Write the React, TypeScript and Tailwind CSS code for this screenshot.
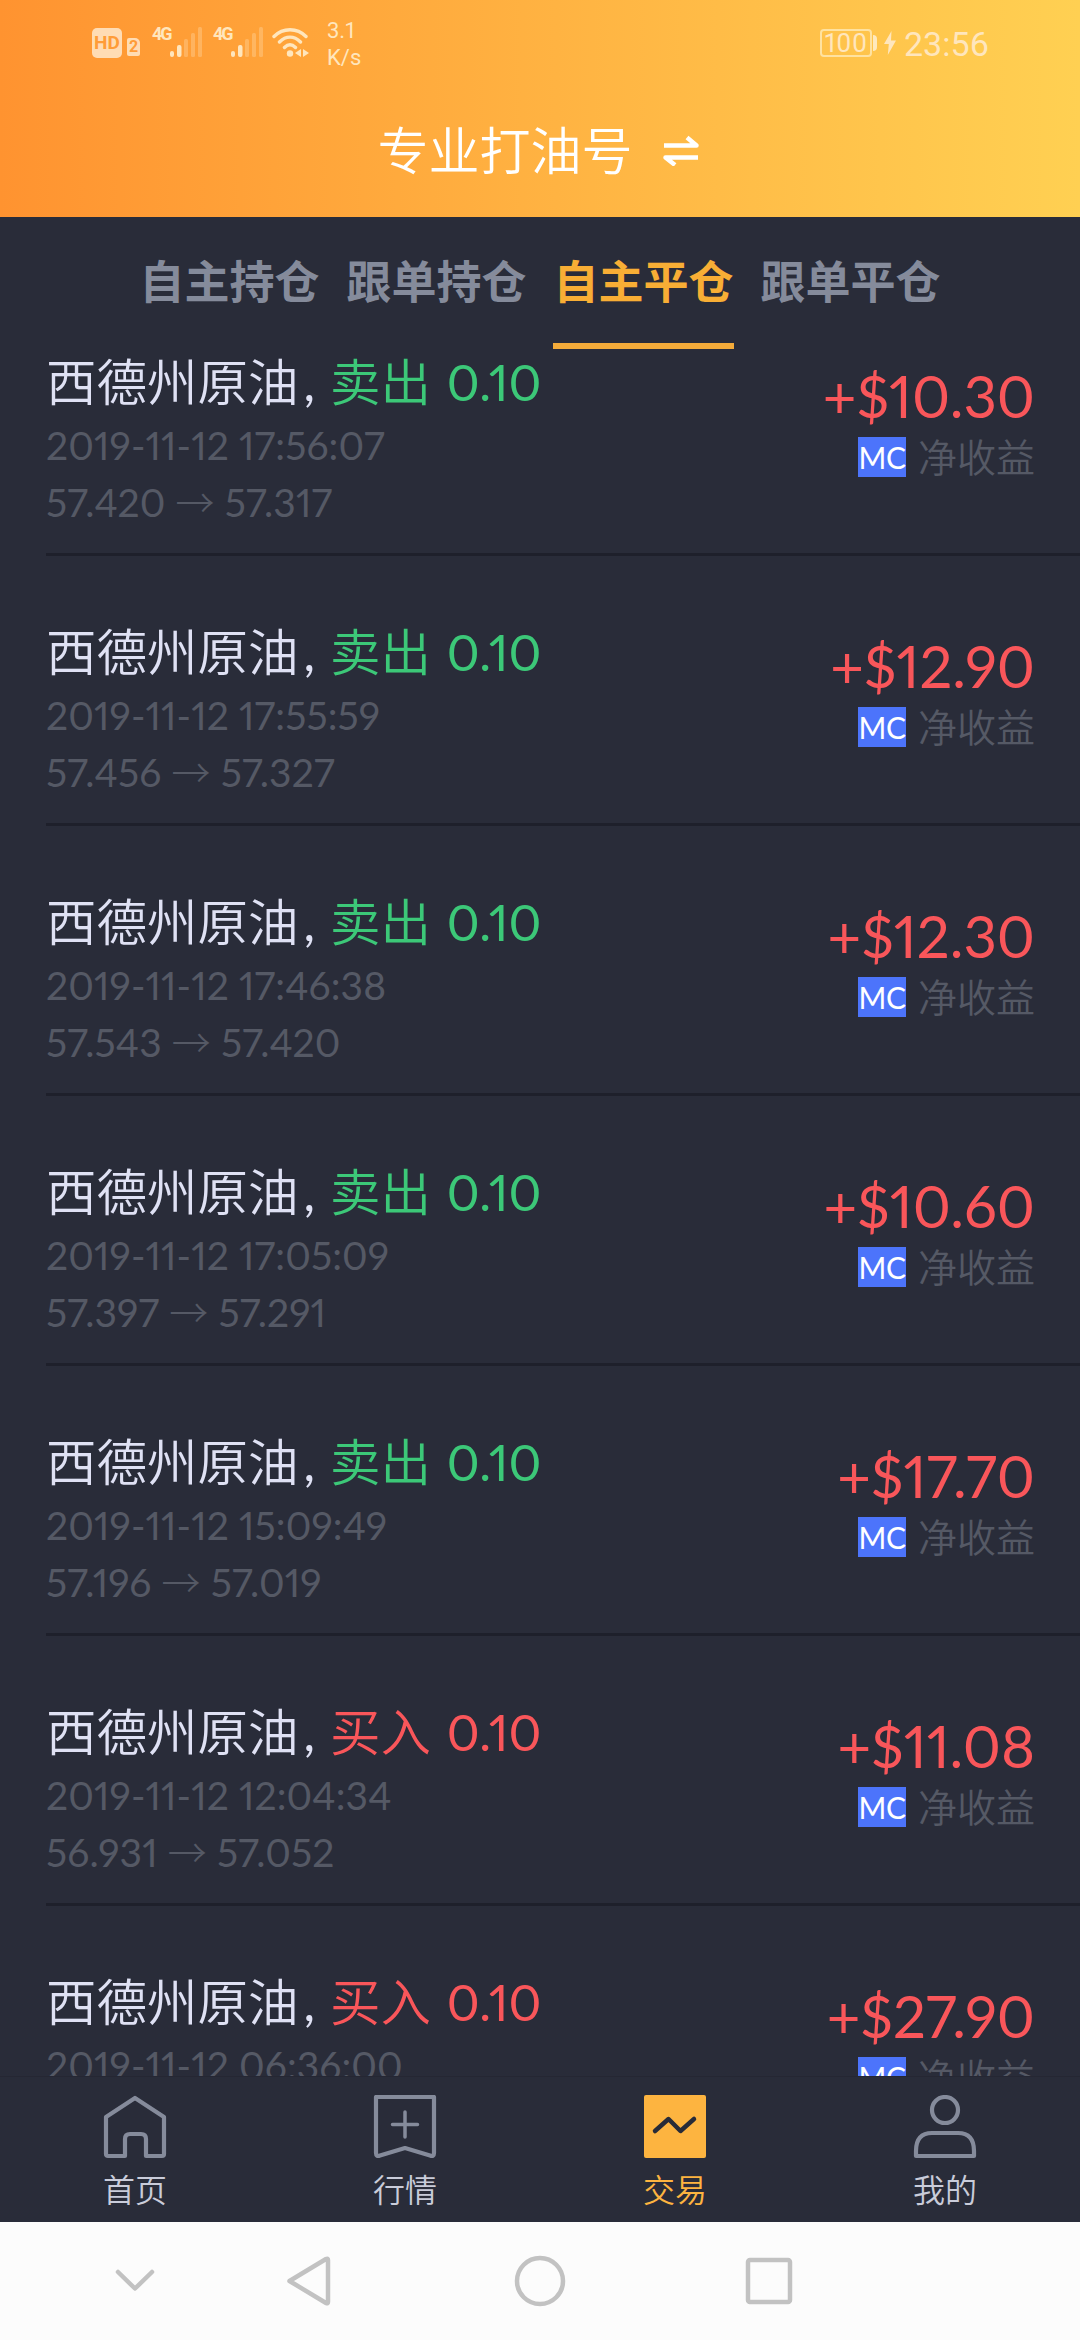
import type { ReactNode } from "react";
import clsx from "clsx";

type Order = {
    side: "buy" | "sell";
    time: string;
    open?: string;
    close?: string;
    profit: string;
};

const tabs = ["自主持仓", "跟单持仓", "自主平仓", "跟单平仓"];
const activeTab = "自主平仓";

const orders: Order[] = [
    { side: "sell", time: "2019-11-12 17:56:07", open: "57.420", close: "57.317", profit: "+$10.30" },
    { side: "sell", time: "2019-11-12 17:55:59", open: "57.456", close: "57.327", profit: "+$12.90" },
    { side: "sell", time: "2019-11-12 17:46:38", open: "57.543", close: "57.420", profit: "+$12.30" },
    { side: "sell", time: "2019-11-12 17:05:09", open: "57.397", close: "57.291", profit: "+$10.60" },
    { side: "sell", time: "2019-11-12 15:09:49", open: "57.196", close: "57.019", profit: "+$17.70" },
    { side: "buy", time: "2019-11-12 12:04:34", open: "56.931", close: "57.052", profit: "+$11.08" },
    { side: "buy", time: "2019-11-12 06:36:00", profit: "+$27.90" },
];

function Signal() {
    return (
        <div className="relative h-8 w-[52px]">
            <span className="absolute left-0 top-0 text-[18px] leading-[14px] font-bold tracking-[-2px]">4G</span>
            <svg className="absolute left-[18px] top-0" width="34" height="32" fill="currentColor">
                <rect x="0" y="24" width="4" height="6" rx="2" />
                <rect x="7" y="18" width="4.5" height="12" rx="2" />
                <g opacity=".3">
                    <rect x="14" y="12" width="4" height="18" rx="1.5" />
                    <rect x="21" y="6" width="4" height="24" rx="1.5" />
                    <rect x="28" y="0" width="4" height="30" rx="1.5" />
                </g>
            </svg>
        </div>
    );
}

function StatusBar() {
    return (
        <div className="flex h-[84px] items-center justify-between pl-[92px] pr-[91px] pt-0.5 font-['Roboto',sans-serif] text-[#ffe6bd]">
            <div className="flex items-center">
                <div className="flex h-[30px] w-[30px] items-center justify-center rounded-[5px] bg-[#ffdcb4] text-[19px] font-bold text-[#ff9c38]">
                    HD
                </div>
                <div className="ml-[5px] mt-2 flex h-[18px] w-[13px] items-center justify-center rounded-[2px] rounded-tr-[5px] bg-[#ffdcb4] text-[16px] font-bold text-[#ff9c38]">
                    2
                </div>
                <div className="ml-3 flex gap-[9px]">
                    <Signal />
                    <Signal />
                </div>
                <svg className="ml-[7px]" width="38" height="32" fill="none" stroke="currentColor" strokeWidth="3.4" strokeLinecap="round">
                    <path d="M2 9.500C11 .5 25 .5 34 9.500M7.500 15C14 8.500 22 8.500 28.500 15M12.500 20.500C16 17 20 17 23.500 20.500" />
                    <circle cx="18" cy="26.500" r="3.200" fill="currentColor" stroke="none" />
                    <path d="M29 22v8l-6-4zM31 22v8l6-4z" fill="currentColor" stroke="none" />
                </svg>
                <div className="ml-[17px] mt-0.5 text-[22px] leading-[27px]">
                    3.1
                    <br />
                    K/s
                </div>
            </div>
            <div className="flex items-center">
                <div className="flex h-7 w-[52px] items-center justify-center rounded-[4px] border-2 border-[#ffe2a0] text-[26px] tracking-[0.5px]">
                    100
                </div>
                <div className="ml-px h-4 w-1 rounded-r-sm bg-[#ffe9bd]" />
                <svg className="ml-[7px] mr-[8px]" width="12" height="24" fill="currentColor">
                    <path d="M7.500 0 0 13h4.800L3.800 24 12 9.500H7z" />
                </svg>
                <span className="mt-0.5 text-[34px]">23:56</span>
            </div>
        </div>
    );
}

function Header() {
    return (
        <header className="h-[217px] shrink-0 bg-linear-to-r from-[#ff9330] to-[#ffd052]">
            <StatusBar />
            <div className="flex h-[133px] items-start justify-center pr-[4px] pt-[33px] text-white">
                <h1 className="text-[51px] leading-[68px] font-[350]">专业打油号</h1>
                <svg className="ml-[30px] mt-[15px]" width="36" height="34" fill="none" stroke="currentColor" strokeWidth="4.500" strokeLinejoin="round">
                    <path d="M1 13.500H33.500L24 5.500M35 25.500H2.500L12 33" />
                </svg>
            </div>
        </header>
    );
}

function Tabs() {
    return (
        <nav className="flex h-[134px] shrink-0 justify-center gap-[26px]">
            {tabs.map((tab) => (
                <button
                    key={tab}
                    className={clsx(
                        "flex h-[132px] w-[181px] justify-center border-b-[6px] pt-[35px] text-[45px] leading-[60px] font-bold whitespace-nowrap",
                        tab === activeTab ? "border-[#f4ab3a] text-[#f8ae35]" : "border-transparent text-[#858b9b]"
                    )}
                >
                    {tab}
                </button>
            ))}
        </nav>
    );
}

function OrderRow({ order }: { order: Order }) {
    return (
        <li className="ml-[46px] flex h-[270px] justify-between border-b-[3px] border-[#1e202b] pr-[45px] pt-[66px]">
            <div>
                <p className="text-[50.500px] leading-[60px] text-[#dfe1f4]">
                    <span className="mr-[5px] font-[350]">西德州原油</span>,{" "}
                    <span className={clsx("ml-[2px]", order.side === "sell" ? "text-[#3cc878]" : "text-[#f9565a]")}>
                        <span className="font-[350]">{order.side === "sell" ? "卖出" : "买入"}</span>{" "}
                        <span className="ml-[3px] text-[50px]">0.10</span>
                    </span>
                </p>
                <p className="mt-[5px] text-[39px] leading-[57px] tracking-[0.1px] text-[#555965]">{order.time}</p>
                {order.open && (
                    <p className="-mt-0.5 text-[39px] leading-[57px] tracking-[0.1px] text-[#555965]">
                        {order.open} <span className="font-['Noto_Sans_CJK_SC',sans-serif] font-light">→</span> {order.close}
                    </p>
                )}
            </div>
            <div className="flex flex-col items-end">
                <p className="mt-[10px] text-[58px] leading-[68px] text-[#f9565a]">{order.profit}</p>
                <div className="mt-[7px] flex items-center gap-3">
                    <span className="flex h-10 w-12 items-center justify-center bg-[#4c74fb] text-[30px] tracking-[-0.5px] text-white">MC</span>
                    <span className="text-[39px] leading-10 font-[350] text-[#555965]">净收益</span>
                </div>
            </div>
        </li>
    );
}

function NavItem({ label, active, children }: { label: string; active?: boolean; children: ReactNode }) {
    return (
        <div className={clsx("flex flex-1 flex-col items-center pt-[18px]", active ? "text-[#fdb440]" : "text-[#858b9b]")}>
            <svg width="64" height="64" fill="none" stroke="currentColor" strokeWidth="4.200" strokeLinejoin="round" strokeLinecap="round">
                {children}
            </svg>
            <span className={clsx("mt-[11px] text-[32px] leading-10 font-[350]", !active && "text-[#c9ccda]")}>{label}</span>
        </div>
    );
}

function BottomNav() {
    return (
        <nav className="flex h-[146px] shrink-0 border-t border-[#252733]">
            <NavItem label="首页">
                <path d="M32 3 61 22V59Q61 61 59 61H43V44Q43 39 38 39H27Q22 39 22 44V61H5Q3 61 3 59V22Z" />
            </NavItem>
            <NavItem label="行情">
                <path d="M3 2H61V58Q61 62 57 60.500L32 53 7 60.500Q3 62 3 58Z" />
                <path d="M32 17V42M19.500 29.500H44.500" strokeWidth="3.500" />
            </NavItem>
            <NavItem label="交易" active>
                <rect x="1" y="0" width="62" height="63" rx="2" fill="currentColor" stroke="none" />
                <path d="M12 36 25.500 24 37.500 36 51 24" stroke="#282b38" strokeWidth="4.500" />
            </NavItem>
            <NavItem label="我的">
                <circle cx="32" cy="15" r="13" />
                <path d="M3 61V56Q3 38 19 38H45Q61 38 61 56V61Z" />
            </NavItem>
        </nav>
    );
}

function SystemNav() {
    return (
        <div className="flex h-[118px] shrink-0 items-center bg-[#fcfcfc] pl-[115px]">
            <svg width="680" height="54" fill="none" stroke="#c2c2c2" strokeWidth="4.500" strokeLinecap="round" strokeLinejoin="round">
                <path d="M3 18 20 34.500 37 18" />
                <path d="M174.500 27 211 5Q213 4 213 6V48Q213 50 211 49Z" />
                <circle cx="425" cy="27" r="23" />
                <rect x="633" y="6" width="42" height="42" rx="2" />
            </svg>
        </div>
    );
}

export default function App() {
    return (
        <div className="flex h-[2340px] w-[1080px] flex-col overflow-hidden bg-[#292c39] font-['Lato','Noto_Sans_CJK_SC',sans-serif] proportional-nums">
            <Header />
            <Tabs />
            <main className="min-h-0 flex-1 overflow-hidden">
                <ul className="-mt-[65px]">
                    {orders.map((order) => (
                        <OrderRow key={order.time} order={order} />
                    ))}
                </ul>
            </main>
            <BottomNav />
            <SystemNav />
        </div>
    );
}
